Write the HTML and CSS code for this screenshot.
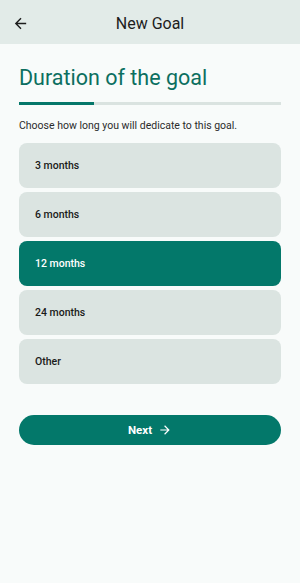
FILE: index.html
```html
<!DOCTYPE html>
<html>
	<head>
		<meta charset="utf-8">
		<title>New Goal</title>
		<link rel="stylesheet" href="styles.css">
	</head>
	<body>
		<div class="topbar">
			<button type="button" class="back">
				<svg width="17" height="17" viewBox="0 0 24 24"><path d="M20 11H7.83l5.59-5.59L12 4l-8 8 8 8 1.41-1.41L7.83 13H20v-2z" fill="#1d1d1d"/></svg>
			</button>
			<div class="title">New Goal</div>
		</div>
		<div class="content">
			<h1 class="heading">Duration of the goal</h1>
			<div class="progress"><div class="bar"></div></div>
			<p class="hint">Choose how long you will dedicate to this goal.</p>
			<ul class="options">
				<li class="option">3 months</li>
				<li class="option">6 months</li>
				<li class="option active">12 months</li>
				<li class="option">24 months</li>
				<li class="option">Other</li>
			</ul>
			<button type="button" class="next">Next
				<svg width="14" height="14" viewBox="0 0 24 24"><path d="M12 4l-1.41 1.41L16.17 11H4v2h12.17l-5.58 5.59L12 20l8-8z" fill="#fff"/></svg>
			</button>
		</div>
	</body>
</html>
```

FILE: styles.css
```css
*{
	margin: 0;
	padding: 0;
	box-sizing: border-box;
}
body{
	background-color: #f8fbfa;
	font-family: Roboto, "Noto Sans", sans-serif;
	color: #1d1d1d;
}
.topbar{
	height: 44px;
	background-color: #e2ebe8;
	display: flex;
	align-items: center;
	position: relative;
	padding-top: 2px;
}
.back{
	width: 40px;
	height: 42px;
	border: none;
	background: none;
	display: flex;
	align-items: center;
	justify-content: center;
}
.title{
	position: absolute;
	left: 0;
	right: 0;
	text-align: center;
	font-size: 16px;
	pointer-events: none;
}
.content{
	padding: 0 19px;
}
.heading{
	margin-top: 21px;
	font-size: 21.5px;
	font-weight: 400;
	color: #0c6f60;
	line-height: 26px;
}
.progress{
	margin-top: 11px;
	height: 3px;
	background-color: #dae3e0;
}
.bar{
	width: 75px;
	height: 3px;
	background-color: #05776a;
}
.hint{
	margin-top: 14px;
	font-size: 10.5px;
	line-height: 14px;
	color: #2b2b2b;
}
.options{
	list-style: none;
	margin-top: 10px;
	display: flex;
	flex-direction: column;
	gap: 4px;
}
.option{
	height: 45px;
	border-radius: 8px;
	background-color: #dbe4e1;
	display: flex;
	align-items: center;
	padding-left: 16px;
	font-size: 10.5px;
	font-weight: 500;
	color: #1a1a1a;
}
.option.active{
	background-color: #03786a;
	color: #fff;
}
.next{
	margin-top: 31px;
	width: 100%;
	height: 30px;
	border: none;
	border-radius: 15px;
	background-color: #03786a;
	color: #fff;
	font-family: Roboto, "Noto Sans", sans-serif;
	font-size: 11.5px;
	font-weight: 700;
	display: flex;
	align-items: center;
	justify-content: center;
	gap: 6px;
}
```
